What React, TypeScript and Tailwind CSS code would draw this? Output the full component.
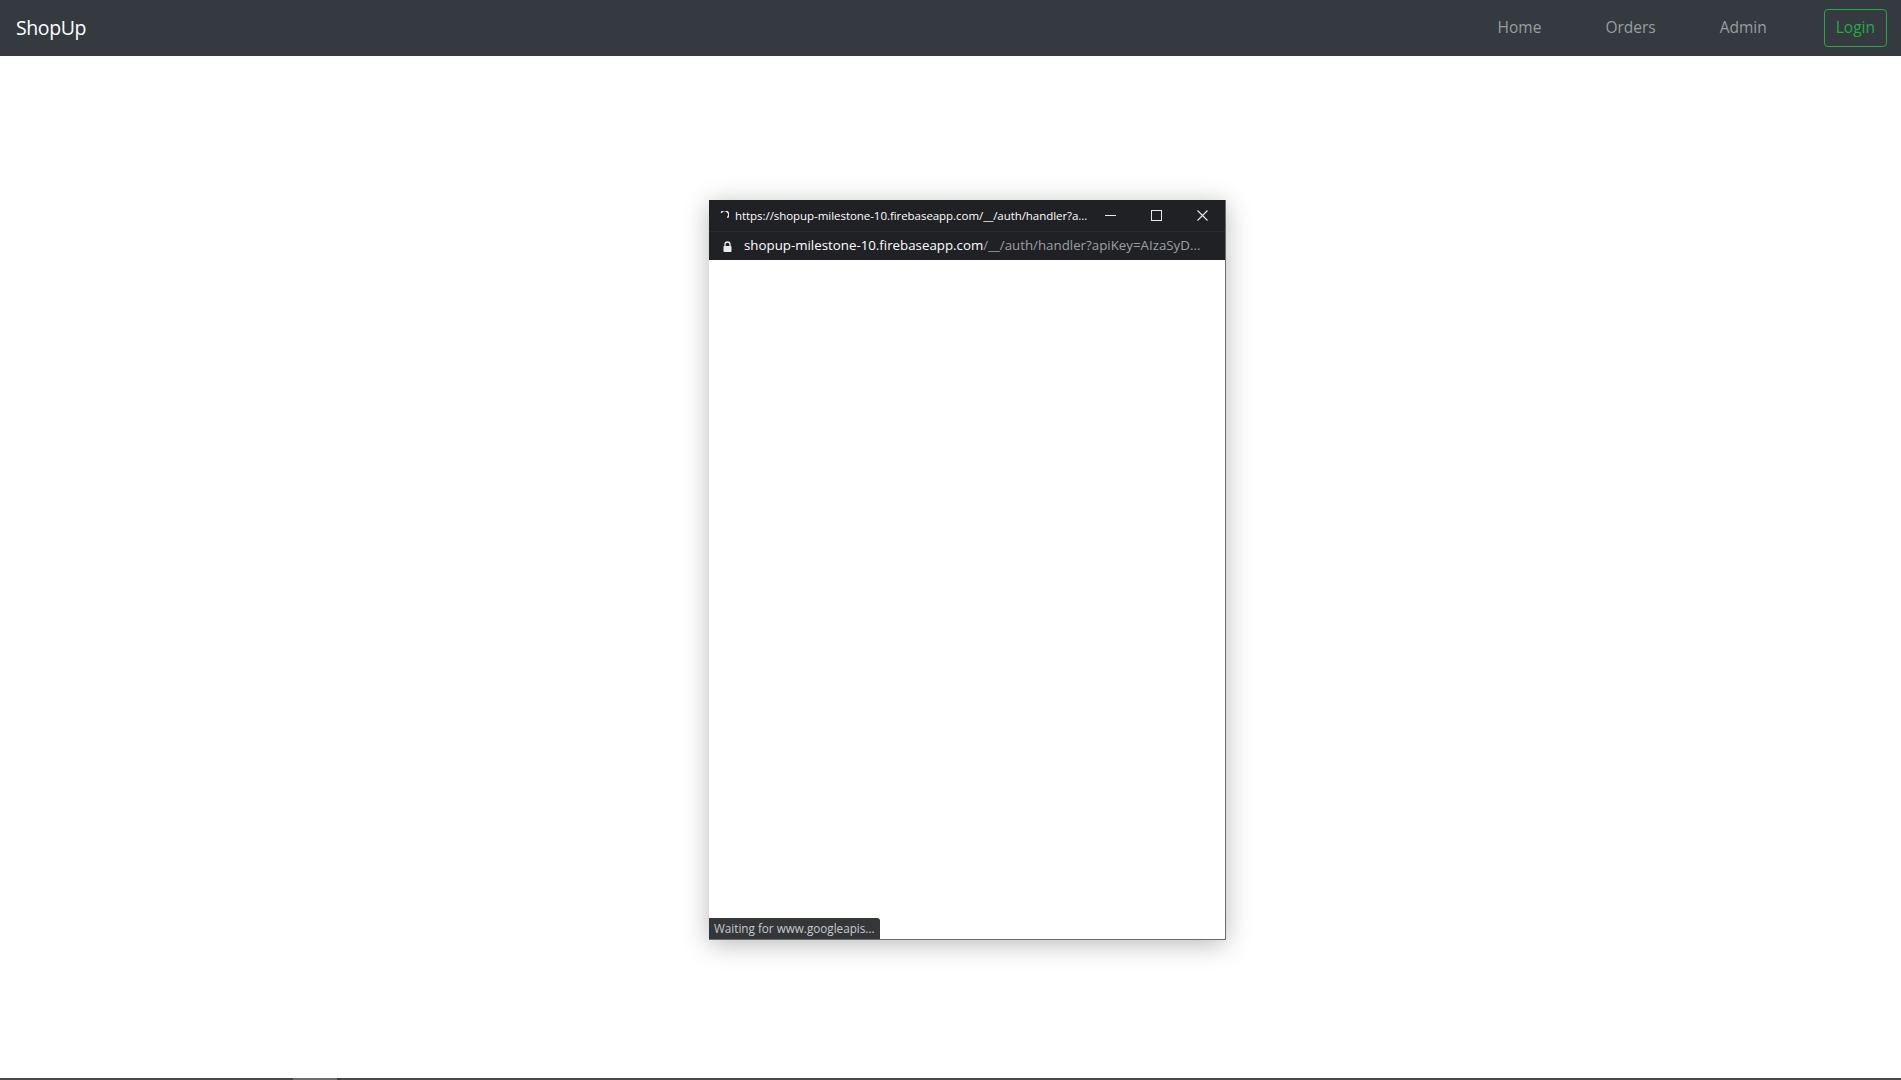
import React from "react";

function Spinner() {
  return (
    <svg width="10" height="10" viewBox="0 0 10 10" className="shrink-0">
      <path d="M2.5 1.2 A4 4 0 0 1 8.8 6.2" fill="none" stroke="#e8eaed" strokeWidth="1.5" strokeLinecap="round" />
    </svg>
  );
}

function Lock() {
  return (
    <svg width="9" height="11" viewBox="0 0 9 11" className="shrink-0">
      <path d="M2 5 V3.5 A2.5 2.5 0 0 1 7 3.5 V5" fill="none" stroke="#e8eaed" strokeWidth="1.3" />
      <rect x="0.5" y="5" width="8" height="6" rx="0.8" fill="#e8eaed" />
    </svg>
  );
}

export default function App() {
  return (
    <div className="relative h-screen w-full bg-white flex flex-col overflow-hidden" style={{ fontFamily: '"Open Sans", "Noto Sans", sans-serif' }}>
      <nav className="h-[56px] bg-[#343a40] flex items-center pl-4 pr-[14px] shrink-0">
        <div className="text-white text-[19.5px] tracking-[-0.4px]">ShopUp</div>
        <div className="ml-auto flex items-center text-[15.5px] text-[#9a9da0]">
          <span className="px-8">Home</span>
          <span className="px-8">Orders</span>
          <span className="px-8">Admin</span>
          <span className="ml-[25px] h-[38px] px-[11px] border border-[#28a745] text-[#28a745] rounded-[4px] flex items-center">Login</span>
        </div>
      </nav>
      <div className="flex-1" />
      <div className="h-[2px] bg-[#4a4a4a] flex shrink-0">
        <div className="w-[293px]" />
        <div className="w-[44px] bg-[#6e6e6e]" />
        <div className="w-[4px] bg-[#3e3e3e]" />
      </div>

      <div className="absolute left-[709px] top-[200px] w-[517px] h-[740px] bg-white border-r border-b border-[#6b6b6b] flex flex-col shadow-[0_4px_24px_rgba(0,0,0,0.28)]">
        <div className="h-[31px] bg-[#202124] flex items-center pl-[10px] text-[11.5px] text-white shrink-0 whitespace-nowrap">
          <Spinner />
          <span className="ml-[6px] tracking-[-0.05px]">https://shopup-milestone-10.firebaseapp.com/__/auth/handler?a...</span>
          <div className="ml-auto flex items-center shrink-0">
            <span className="w-[46px] flex justify-center">
              <svg width="11" height="11" viewBox="0 0 11 11"><path d="M0 5.5 H11" stroke="#e8eaed" strokeWidth="1" /></svg>
            </span>
            <span className="w-[46px] flex justify-center">
              <svg width="11" height="11" viewBox="0 0 11 11"><rect x="0.5" y="0.5" width="10" height="10" fill="none" stroke="#e8eaed" strokeWidth="1" /></svg>
            </span>
            <span className="w-[46px] flex justify-center">
              <svg width="11" height="11" viewBox="0 0 11 11"><path d="M0.5 0.5 L10.5 10.5 M10.5 0.5 L0.5 10.5" stroke="#e8eaed" strokeWidth="1.1" /></svg>
            </span>
          </div>
        </div>
        <div className="h-[29px] bg-[#202124] border-t border-[#2a2b2e] flex items-center pl-[14px] text-[13.3px] shrink-0 whitespace-nowrap">
          <Lock />
          <span className="ml-[12px] text-white">shopup-milestone-10.firebaseapp.com</span>
          <span className="text-[#9aa0a6]">/__/auth/handler?apiKey=AIzaSyD...</span>
        </div>
        <div className="flex-1 relative">
          <div className="absolute left-0 bottom-0 h-[21px] px-[5px] bg-[#35363a] text-[#c8cacd] text-[11.7px] flex items-center rounded-tr-[3px] whitespace-nowrap">
            Waiting for www.googleapis...
          </div>
        </div>
      </div>
    </div>
  );
}
